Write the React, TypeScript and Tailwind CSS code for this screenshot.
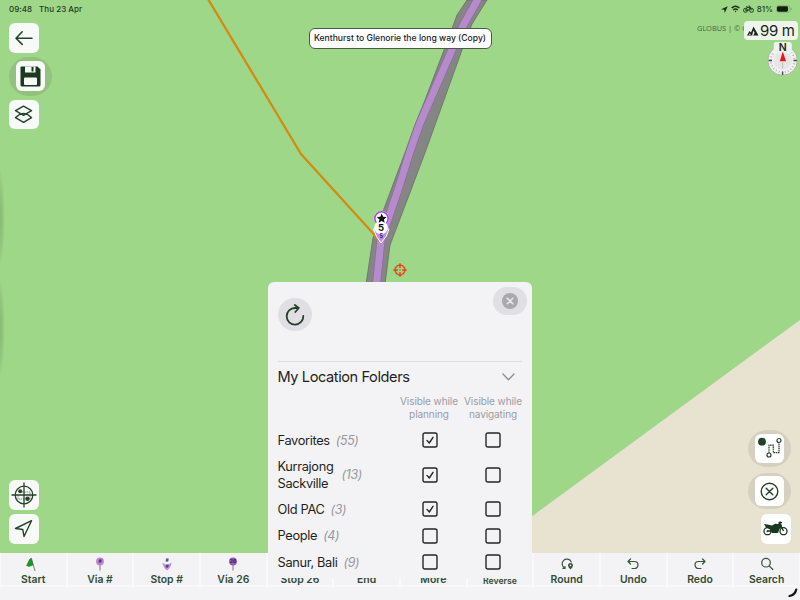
import React from "react";

const INK = "#24422a";

function MapCanvas() {
  return (
    <svg className="absolute inset-0" width="800" height="553" viewBox="0 0 800 553">
      <defs>
        <radialGradient id="edge">
          <stop offset="0" stopColor="#5f8a50" stopOpacity="0.4" />
          <stop offset="0.6" stopColor="#5f8a50" stopOpacity="0.2" />
          <stop offset="1" stopColor="#5f8a50" stopOpacity="0" />
        </radialGradient>
      </defs>
      <rect width="800" height="553" fill="#9fd788" />
      <path d="M800 320L531 517L480 553H800Z" fill="#e8e2d1" />
      <ellipse cx="0" cy="218" rx="5" ry="50" fill="url(#edge)" />
      <ellipse cx="0" cy="328" rx="5" ry="50" fill="url(#edge)" />
      <path
        d="M467 0L457 15L444 50L425 100L414.500 126L406 150L391 190L373 238L366 284H385L390 245L411 190L426 150L462 50L472 24L487 0Z"
        fill="#858585"
        stroke="#6b6f68"
        strokeWidth="0.800"
      />
      <path d="M478.500 -2L464 24L451 52L420 123L410.500 150L398 190L381 240L376.500 284" fill="none" stroke="#8a6a9c" strokeWidth="8.400" />
      <path d="M478.500 -2L464 24L451 52L420 123L410.500 150L398 190L381 240L376.500 284" fill="none" stroke="#b58bcb" strokeWidth="7.200" />
      <path d="M208 -1L301 154L380 241" fill="none" stroke="#d38a10" strokeWidth="2.200" />
      {/* stop marker */}
      <path d="M373.500 229Q375.500 236.500 381 243Q387.500 236.500 389 229Z" fill="#c48be6" stroke="#fff" strokeWidth="1" />
      <circle cx="381.500" cy="218.500" r="7.600" fill="#fff" />
      <circle cx="381.500" cy="218.500" r="6.700" fill="#fff" stroke="#a445ea" strokeWidth="1.600" />
      <circle cx="381" cy="227.500" r="6.800" fill="#fff" />
      <path d="M381.700 213.600l1.400 3.200 3.500.3-2.700 2.300.8 3.400-3-1.900-3 1.900.8-3.400-2.700-2.300 3.500-.3z" fill="#111" />
      <text x="381" y="231.200" textAnchor="middle" fontSize="9.500" fontWeight="700" fontFamily="Inter, sans-serif" fill="#111">5</text>
      <text x="381.300" y="237.800" textAnchor="middle" fontSize="5.500" fontWeight="700" fontFamily="Inter, sans-serif" fill="#43245a">5</text>
      {/* map centre crosshair */}
      <g fill="none" stroke="#e2481f" strokeWidth="1.500">
        <circle cx="400" cy="270" r="4.900" />
        <path d="M400 263.300v4.700M400 272v4.700M393.300 270h4.700M402 270h4.700" />
      </g>
      <circle cx="400" cy="270" r="0.800" fill="#e2501f" />
    </svg>
  );
}

function Tile({ children, className = "" }: { children: React.ReactNode; className?: string }) {
  return (
    <div className={`flex h-[29.500px] w-[29.500px] items-center justify-center rounded-[6px] bg-[#f8faf7] ${className}`}>
      {children}
    </div>
  );
}

function LeftTools() {
  return (
    <>
      <div className="absolute left-[9px] top-[23px] flex flex-col">
        <Tile>
          <svg width="20" height="20" viewBox="0 0 20 20" fill="none" stroke={INK} strokeWidth="1.600" strokeLinecap="round" strokeLinejoin="round">
            <path d="M18 10.200H2M8.200 3.800L2 10.200l6.200 6.200" />
          </svg>
        </Tile>
        <div className="mt-[4px] flex h-[39px] w-[43px] items-center justify-center rounded-full bg-[#92c27e]">
          <Tile>
            <svg width="21" height="21" viewBox="0 0 21 21">
              <path d="M1.500 .5H17.500L20.500 3.500V19Q20.500 20.500 19 20.500H2Q.5 20.500 .5 19V1.500Q.5 .5 1.500 .5Z" fill="#193a21" />
              <path d="M5 .5h10.500v6H5z" fill="#f8faf7" />
              <path d="M11.500 1h2v4.500h-2z" fill="#193a21" />
              <rect x="4" y="11.500" width="13" height="7.500" rx="1" fill="#f8faf7" />
            </svg>
          </Tile>
        </div>
        <Tile className="mt-[4px]">
          <svg width="19" height="19" viewBox="0 0 19 19" fill="none" stroke={INK} strokeWidth="1.400" strokeLinejoin="round">
            <path d="M9.500 1.200L17.500 5.600L9.500 10.300L1.500 5.600Z" />
            <path d="M5.500 9.500L1.500 12.600L9.500 17.400L17.500 12.600L13.500 9.500L9.500 8.500Z" />
          </svg>
        </Tile>
      </div>
      <div className="absolute left-[9px] top-[480px] flex flex-col gap-[4.500px]">
        <Tile>
          <svg width="26" height="26" viewBox="0 0 26 26" fill="none" stroke={INK} strokeWidth="1.300">
            <circle cx="13" cy="13" r="8.800" />
            <path d="M13 .5V25.500M.5 13H25.500" />
            <path d="M9 10h10v7H7v-4" strokeWidth="0.700" strokeDasharray="1 .8" />
            <circle cx="9.200" cy="9.300" r="2" fill={INK} stroke="none" />
            <circle cx="16.500" cy="16.700" r="2.200" fill={INK} stroke="none" />
          </svg>
        </Tile>
        <Tile>
          <svg width="19" height="19" viewBox="0 0 19 19" fill="none" stroke={INK} strokeWidth="1.400" strokeLinejoin="round">
            <path d="M17.500 1.700L1.500 9.500L8.800 10.500L10 17.500Z" />
          </svg>
        </Tile>
      </div>
    </>
  );
}

function RightTools() {
  return (
    <div className="absolute right-[9px] top-[430px] flex flex-col items-start">
      <div className="flex h-[37px] w-[43px] items-center justify-center rounded-full bg-[#d6d0c1]">
        <Tile className="bg-white">
          <svg width="25" height="25" viewBox="0 0 25 25" fill="none" stroke={INK} strokeWidth="1.200">
            <circle cx="5" cy="5.700" r="3.900" fill={INK} stroke="none" />
            <circle cx="22" cy="4.500" r="2" />
            <circle cx="12" cy="19" r="2" />
            <path d="M12 17V9.200h4.300v7.500h5.700V6.500" strokeDasharray="1.600 .6" />
          </svg>
        </Tile>
      </div>
      <div className="mt-[6px] flex h-[36px] w-[43px] items-center justify-center rounded-full bg-[#d6d0c1]">
        <Tile className="bg-white">
          <svg width="19" height="19" viewBox="0 0 19 19" fill="none" stroke={INK} strokeWidth="1.400" strokeLinecap="round">
            <circle cx="9.500" cy="9.500" r="8.300" />
            <path d="M6.200 6.200l6.600 6.600M12.800 6.200l-6.600 6.600" />
          </svg>
        </Tile>
      </div>
      <Tile className="ml-[13px] mt-[5px] bg-white">
        <svg width="25" height="15" viewBox="0 0 25 15">
          <g fill="none" stroke="#183820" strokeWidth="1.300">
            <circle cx="4.500" cy="10.200" r="3.500" />
            <circle cx="20.500" cy="10.200" r="3.500" />
            <path d="M16.500 2l4 8M4.500 10h6M15.500 2.500l1.500-1.500 2 1" />
          </g>
          <path d="M1 3l5 .8 3 .7 3-1.800 3.500 .3 2-1 1.300 2-.3 2.500-2 1.500-1.500 4h-6l-2.500-4-3.500-1.500z" fill="#183820" />
          <circle cx="4.500" cy="10.200" r="1" fill="#183820" />
        </svg>
      </Tile>
    </div>
  );
}

function StatusBar() {
  return (
    <div className="absolute inset-x-0 top-0 flex h-[18px] items-center justify-between pl-[9px] pr-[8px] text-[8px] font-medium text-[#203a1c]">
      <div className="flex gap-[7px] tracking-[0.030px]">
        <span>09:48</span>
        <span>Thu 23 Apr</span>
      </div>
      <div className="flex items-center">
        <svg width="7" height="7" viewBox="0 0 7 7"><path d="M6.800 .2L0 3.300l3.200.5.500 3.100z" fill="#1b2e17" /></svg>
        <svg className="ml-[3px]" width="9" height="8" viewBox="0 0 9 8" fill="none" stroke="#1b2e17" strokeWidth="1.400">
          <path d="M.6 3Q4.500-.5 8.400 3M2.200 4.900Q4.500 2.900 6.800 4.900" />
          <circle cx="4.500" cy="6.500" r=".7" fill="#1b2e17" stroke="none" />
        </svg>
        <svg className="ml-[3px]" width="11" height="8" viewBox="0 0 11 8" fill="none" stroke="#1b2e17" strokeWidth=".9">
          <circle cx="2.500" cy="5.300" r="2" /><circle cx="8.500" cy="5.300" r="2" />
          <path d="M2.500 5.300L4 2.400h3L5.500 5.300zM3 1.800h1.600M8.500 5.300L6.700 1H5.500" />
        </svg>
        <span className="ml-[3px]">81%</span>
        <svg className="ml-[3px]" width="16" height="8" viewBox="0 0 16 8">
          <rect x=".5" y=".8" width="13.500" height="6.400" rx="2" fill="none" stroke="#7aa66b" strokeWidth=".7" />
          <rect x="1" y="1.300" width="11" height="5.400" rx="1.400" fill="#10200f" />
          <path d="M15 3v2" stroke="#7aa66b" />
        </svg>
      </div>
    </div>
  );
}

function Compass() {
  return (
    <svg className="absolute left-[766px] top-[41px]" width="34" height="36" viewBox="0 0 34 36">
      <circle cx="16.600" cy="19.500" r="14.800" fill="#f0f0f0" stroke="#a9b6a5" strokeWidth="1" />
      <circle cx="16.600" cy="19.500" r="11.800" fill="none" stroke="#999" strokeWidth="2" strokeDasharray=".6 2.490" />
      <path d="M2.500 19.500h3.500M27.500 19.500h3.500M16.600 30.500v3.500" stroke="#4a4a4a" strokeWidth="1.400" />
      <circle cx="16.600" cy="19.500" r="9" fill="#e6e6e6" />
      <rect x="7.800" y="1" width="18" height="11.500" rx="2.500" fill="#eff3ed" />
      <path d="M16.800 10.500L13.800 20.300H20Z" fill="#e81717" />
      <path d="M16.600 21.500v6" stroke="#bbb" />
      <text x="16.700" y="10" textAnchor="middle" fontSize="10.500" fontWeight="600" fontFamily="Inter, sans-serif" fill="#222">N</text>
    </svg>
  );
}

function Check({ on }: { on: boolean }) {
  return (
    <svg width="16" height="16" viewBox="0 0 16 16" fill="none" stroke="#252525" strokeWidth="1.400" strokeLinecap="round" strokeLinejoin="round">
      <rect x="1" y="1" width="14" height="14" rx="1.800" />
      {on && <path d="M5 8.400L7.300 11L11 5.300" />}
    </svg>
  );
}

const folders = [
  { name: "Favorites", count: 55, on: true, h: "h-[26px]", gap: "ml-[6px]" },
  { name: "Kurrajong Sackville", count: 13, on: true, h: "h-[43px]", gap: "ml-[8px]" },
  { name: "Old PAC", count: 3, on: true, h: "h-[26px]", gap: "ml-[6px]" },
  { name: "People", count: 4, on: false, h: "h-[27px]", gap: "ml-[6px]" },
  { name: "Sanur, Bali", count: 9, on: false, h: "h-[26px]", gap: "ml-[6px]" },
];

function FolderPanel() {
  return (
    <div className="absolute left-[268px] top-[282px] z-10 flex h-[296px] w-[264px] flex-col overflow-hidden rounded-t-[6px] bg-[#f3f3f6] text-[#1e1e20]">
      <div className="ml-[10px] mr-[10px] flex h-[80px] shrink-0 items-start justify-between border-b border-[#dcdce1]">
        <div className="mt-[16px] flex h-[33px] w-[34px] items-center justify-center rounded-full bg-[#dfdfe4]">
          <svg width="20" height="22" viewBox="0 0 20 22" fill="none" stroke={INK} strokeWidth="1.800" strokeLinecap="round" strokeLinejoin="round">
            <path d="M18.300 12A8.300 8.300 0 1 1 10 4h3.500M9.800 1l4 3-3.500 4" />
          </svg>
        </div>
        <div className="-mr-[5px] mt-[5px] flex h-[28px] w-[34px] items-center justify-center rounded-full bg-[#dfdfe4]">
          <svg width="16" height="16" viewBox="0 0 16 16">
            <circle cx="8" cy="8" r="8" fill="#a9a9ab" />
            <path d="M5.200 5.200l5.600 5.600M10.800 5.200l-5.600 5.600" stroke="#e8e8ec" strokeWidth="1.600" strokeLinecap="round" />
          </svg>
        </div>
      </div>
      <div className="flex h-[30px] shrink-0 items-center justify-between pl-[9.500px] pr-[17px]">
        <span className="pt-[2px] text-[14.600px] tracking-[-0.420px]">My Location Folders</span>
        <svg width="13" height="8" viewBox="0 0 13 8" fill="none" stroke="#8c8c90" strokeWidth="1.300" strokeLinecap="round" strokeLinejoin="round">
          <path d="M1 1l5.500 5.700L12 1" />
        </svg>
      </div>
      <div className="mt-[3px] flex h-[32px] shrink-0 justify-end gap-[5px] pr-[9.500px] text-center text-[10px] leading-[13px] tracking-[-0.080px] text-[#9b9b9f]">
        <span className="w-[59px] whitespace-nowrap">Visible while<br />planning</span>
        <span className="w-[59px] whitespace-nowrap">Visible while<br />navigating</span>
      </div>
      {folders.map((f) => (
        <div key={f.name} className={`flex shrink-0 items-center pl-[10px] ${f.h}`}>
          <div className="-ml-[0.500px] flex w-[144.500px] items-center text-[12.800px] leading-[17px] tracking-[-0.330px]">
            <span className={f.count === 13 ? "w-[56px]" : ""}>{f.name}</span>
            <span className={`text-[12.400px] italic text-[#98989d] ${f.gap}`}>({f.count})</span>
          </div>
          <Check on={f.on} />
          <div className="ml-[47px] flex"><Check on={false} /></div>
        </div>
      ))}
    </div>
  );
}

function ToolIcon({ kind }: { kind: string }) {
  if (kind === "flag")
    return <svg width="14" height="16" viewBox="0 0 14 16"><path d="M5.500 3l3.500 12" stroke="#7a7a7a" strokeWidth="1" /><path d="M5.200 2Q3.300 3 2.500 5.500Q1.500 8 .5 9.500L3 10.500l4-1.500Z" fill="#129e1e" stroke="#285d2b" strokeWidth=".5" /></svg>;
  if (kind === "via#" || kind === "via26")
    return (
      <svg width="14" height="16" viewBox="0 0 14 16">
        <path d="M7 8v6.500" stroke="#8c8c91" strokeWidth="1.200" />
        <circle cx="7" cy="5.500" r="3.900" fill={kind === "via26" ? "#955bb8" : "#b984da"} />
        <text x="7" y="7.400" textAnchor="middle" fontSize="5" fontWeight="700" fontFamily="Inter, sans-serif" fill="#422057">{kind === "via26" ? "26" : "#"}</text>
      </svg>
    );
  if (kind === "stop#")
    return (
      <svg width="14" height="16" viewBox="0 0 14 16">
        <path d="M2.500 6.500Q3 11.500 7 14.500Q11 11.500 11.500 6.500L7 9.500Z" fill="#c98bec" />
        <g fontSize="5" fontWeight="700" fontFamily="Inter, sans-serif" fill="#333" textAnchor="middle">
          <text x="7" y="6.300">#</text><text x="7" y="11.800">#</text>
        </g>
      </svg>
    );
  return (
    <svg width="14" height="16" viewBox="0 0 14 16" fill="none" stroke="#365239" strokeWidth="1.200" strokeLinecap="round" strokeLinejoin="round">
      {kind === "round" && (
        <>
          <path d="M3 12.400H5V10.500M4.800 12A4.700 4.700 0 1 1 11.200 6" />
          <path d="M10.500 7a2.500 2.500 0 0 1 2.500 2.500Q12.800 11.300 10.500 13.500Q8.200 11.300 8 9.500A2.500 2.500 0 0 1 10.500 7Z" fill="#365239" stroke="none" />
          <circle cx="10.500" cy="9.400" r=".8" fill="#fff" stroke="none" />
        </>
      )}
      {kind === "undo" && <path d="M4.500 3L2 5.500L4.500 8M2 5.500h6.500a3.500 3.500 0 0 1 0 7H6" />}
      {kind === "redo" && <path d="M9.500 3L12 5.500L9.500 8M12 5.500H5.500a3.500 3.500 0 0 0 0 7H8" />}
      {kind === "search" && <><circle cx="6" cy="6.700" r="4.300" /><path d="M9.200 9.900l3.600 3.600" /></>}
    </svg>
  );
}

const tools = [
  ["Start", "flag"], ["Via #", "via#"], ["Stop #", "stop#"], ["Via 26", "via26"],
  ["Stop 26", ""], ["End", ""], ["More", ""], ["Reverse", ""],
  ["Round", "round"], ["Undo", "undo"], ["Redo", "redo"], ["Search", "search"],
];

export default function App() {
  return (
    <div className="relative flex h-[600px] w-[800px] flex-col overflow-hidden bg-[#f3f3f6] font-['Inter',sans-serif]">
      <main className="relative h-[553px] shrink-0">
        <MapCanvas />
        <StatusBar />
        <div className="absolute left-[308.500px] top-[27.500px] flex h-[21px] w-[183px] items-center justify-center whitespace-nowrap rounded-[6px] border-[1.500px] border-[#4d594a] bg-white text-[8.600px] font-medium text-[#222]">
          Kenthurst to Glenorie the long way (Copy)
        </div>
        <div className="absolute left-[697px] top-[23px] whitespace-nowrap font-['Noto_Sans',sans-serif] text-[7.400px] leading-[10px] text-[#4d6548]">GLOBUS | © G</div>
        <div className="absolute left-[744px] top-[21px] flex h-[19px] w-[54px] items-center rounded-[4px] bg-[#eef5eb] pl-[3px] text-[15px] tracking-[-0.350px] text-[#1b241a]">
          <svg className="mr-[1px] shrink-0" width="12" height="10" viewBox="0 0 12 10">
            <path d="M0 9.500L2.500 5L4 6.500L6.500 .5L11.500 9.500Z" fill="#222" />
            <path d="M5 9.500L6.500 4.500l1 2-1 3zM2 9l1-2 .5 2z" fill="#eef5eb" />
          </svg>
          <span className="whitespace-nowrap pt-px">99 m</span>
        </div>
        <Compass />
        <LeftTools />
        <RightTools />
      </main>
      <nav className="grid h-[34px] shrink-0 grid-cols-12 border-b-2 border-[#f8f8fa]">
        {tools.map(([label, kind]) => (
          <div key={label} className="flex flex-col items-center border-x border-[#f9f9fb] pt-[3px]">
            <div className="h-[17px]"><ToolIcon kind={kind} /></div>
            <span className={`whitespace-nowrap font-semibold leading-[14px] text-[#304c34] ${label === "Reverse" ? "mt-px text-[8.700px]" : "text-[10.400px]"}`}>{label}</span>
          </div>
        ))}
      </nav>
      <FolderPanel />
      <svg className="absolute left-[787px] top-[586px]" width="12" height="12" viewBox="0 0 12 12" fill="none" stroke="#111" strokeWidth="2.200" strokeLinecap="round">
        <path d="M2.500 10Q8 9 9.300 3.500" />
      </svg>
    </div>
  );
}
